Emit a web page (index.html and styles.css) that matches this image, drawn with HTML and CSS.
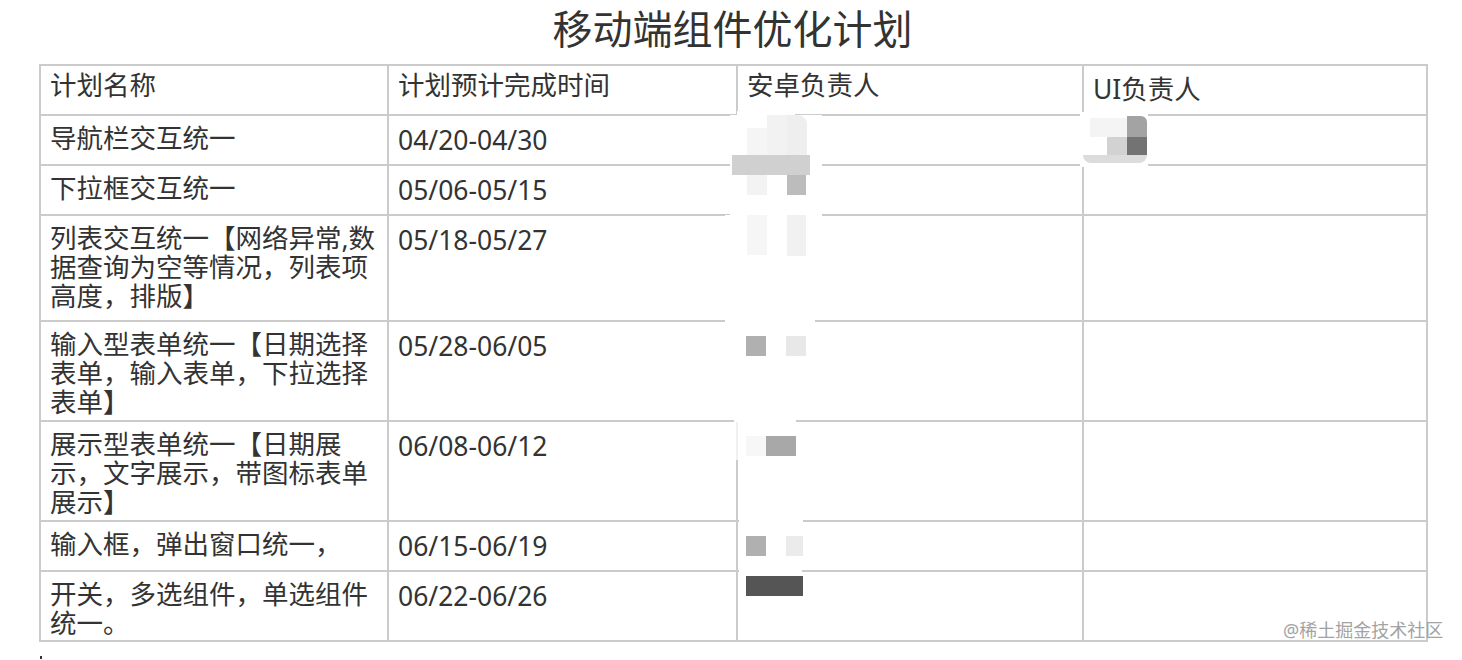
FILE: index.html
```html
<!DOCTYPE html>
<html lang="zh-CN">
<head>
<meta charset="utf-8">
<title>移动端组件优化计划</title>
<link rel="stylesheet" href="styles.css">
</head>
<body>
<div class="page">
  <h1 class="title">移动端组件优化计划</h1>
  <table class="plan">
    <colgroup>
      <col class="c1"><col class="c2"><col class="c3"><col class="c4">
    </colgroup>
    <tr class="h50 head">
      <td>计划名称</td><td>计划预计完成时间</td><td>安卓负责人</td><td class="ui">UI负责人</td>
    </tr>
    <tr class="h50">
      <td>导航栏交互统一</td><td class="date">04/20-04/30</td><td></td><td></td>
    </tr>
    <tr class="h50">
      <td>下拉框交互统一</td><td class="date">05/06-05/15</td><td></td><td></td>
    </tr>
    <tr class="h106">
      <td>列表交互统一【网络异常,数据查询为空等情况，列表项高度，排版】</td><td class="date">05/18-05/27</td><td></td><td></td>
    </tr>
    <tr class="h100">
      <td>输入型表单统一【日期选择表单，输入表单，下拉选择表单】</td><td class="date">05/28-06/05</td><td></td><td></td>
    </tr>
    <tr class="h100">
      <td>展示型表单统一【日期展示，文字展示，带图标表单展示】</td><td class="date">06/08-06/12</td><td></td><td></td>
    </tr>
    <tr class="h50">
      <td>输入框，弹出窗口统一，</td><td class="date">06/15-06/19</td><td></td><td></td>
    </tr>
    <tr class="h70">
      <td>开关，多选组件，单选组件统一。</td><td class="date">06/22-06/26</td><td></td><td></td>
    </tr>
  </table>

  <!-- redaction mosaic over the owner columns -->
  <div class="m w1"></div>
  <div class="m w2"></div>
  <div class="m w3"></div>
  <div class="m w4"></div>
  <div class="m w5"></div>
  <div class="m w6"></div>
  <div class="m w7"></div>
  <div class="m w8"></div>

  <div class="m a1"></div>
  <div class="m a2"></div>
  <div class="m a3"></div>
  <div class="m a4"></div>
  <div class="m a5"></div>
  <div class="m a6"></div>
  <div class="m b1"></div>
  <div class="m b2"></div>
  <div class="m c1m"></div>
  <div class="m c2m"></div>
  <div class="m d1"></div>
  <div class="m d2"></div>
  <div class="m e1"></div>
  <div class="m e2"></div>
  <div class="m f1"></div>

  <div class="m u1"></div>
  <div class="m u2"></div>
  <div class="m u3"></div>
  <div class="m u4"></div>
  <div class="m u5"></div>

  <div class="watermark">@稀土掘金技术社区</div>
  <div class="dot"></div>
</div>
</body>
</html>
```
FILE: styles.css
```css
html, body {
  margin: 0;
  padding: 0;
  background: #ffffff;
}

body {
  font-family: "Noto Sans", "Noto Sans CJK SC", sans-serif;
  color: #333333;
}

.page {
  position: relative;
  width: 1462px;
  height: 660px;
  overflow: hidden;
}

.title {
  margin: 0 0 0 39px;
  padding-top: 2px;
  width: 1387px;
  line-height: 54px;
  font-size: 40px;
  font-weight: normal;
  text-align: center;
  color: #333333;
}

.plan {
  margin: 8px 0 0 39px;
  width: 1387px;
  table-layout: fixed;
  border-collapse: collapse;
}

.plan .c1 { width: 348px; }
.plan .c2 { width: 349px; }
.plan .c3 { width: 346px; }
.plan .c4 { width: 344px; }

.plan td {
  border: 2px solid #cbcbcb;
  padding: 8px 6px 0 9px;
  vertical-align: top;
  font-size: 26.5px;
  line-height: 29px;
  color: #333333;
}

.plan td.date {
  padding-top: 10px;
}

.plan .head td {
  padding-top: 5px;
}

.plan .head td.ui {
  padding-top: 9px;
}

.h50 { height: 50px; }
.h70 { height: 70px; }
.h100 { height: 100px; }
.h106 { height: 106px; }

/* mosaic pieces */
.m {
  position: absolute;
  background: #ffffff;
}

.w1 { left: 737px; top: 111px; width: 58px; height: 5px; }
.w2 { left: 730px; top: 115px; width: 92px; height: 101px; }
.w3 { left: 725px; top: 215px; width: 90px; height: 107px; }
.w4 { left: 734px; top: 321px; width: 62px; height: 101px; }
.w5 { left: 734px; top: 420px; width: 6px; height: 40px; background: rgba(255, 255, 255, 0.7); }
.w6 { left: 739px; top: 518px; width: 64px; height: 4px; }
.w7 { left: 739px; top: 568px; width: 63px; height: 4px; }
.w8 { left: 1080px; top: 112px; width: 68px; height: 55px; }

.a1 { left: 747px; top: 128px; width: 20px; height: 62px; background: #f5f5f5; }
.a2 { left: 767px; top: 115px; width: 20px; height: 40px; background: #f2f2f2; }
.a3 { left: 787px; top: 115px; width: 20px; height: 40px; background: #eeeeee; border-top-right-radius: 9px; }
.a4 { left: 732px; top: 155px; width: 78px; height: 20px; background: #d0d0d0; }
.a5 { left: 787px; top: 175px; width: 19px; height: 20px; background: #bcbcbc; }
.a6 { left: 747px; top: 175px; width: 20px; height: 20px; background: #f3f3f3; }
.b1 { left: 747px; top: 215px; width: 20px; height: 40px; background: #f6f6f6; }
.b2 { left: 787px; top: 215px; width: 19px; height: 41px; background: #f1f1f1; }
.c1m { left: 746px; top: 336px; width: 20px; height: 20px; background: #b0b0b0; }
.c2m { left: 786px; top: 336px; width: 20px; height: 20px; background: #e8e8e8; }
.d1 { left: 766px; top: 436px; width: 30px; height: 20px; background: #a8a8a8; }
.d2 { left: 746px; top: 436px; width: 20px; height: 20px; background: #f7f7f7; }
.e1 { left: 746px; top: 536px; width: 20px; height: 20px; background: #b0b0b0; }
.e2 { left: 786px; top: 536px; width: 17px; height: 20px; background: #ebebeb; }
.f1 { left: 746px; top: 576px; width: 57px; height: 20px; background: #555555; }

.u1 { left: 1090px; top: 118px; width: 37px; height: 19px; background: #f4f4f4; }
.u2 { left: 1127px; top: 116px; width: 20px; height: 21px; background: #a3a3a3; border-top-right-radius: 6px; }
.u3 { left: 1107px; top: 137px; width: 20px; height: 18px; background: #d2d2d2; }
.u4 { left: 1127px; top: 137px; width: 20px; height: 18px; background: #737373; }
.u5 { left: 1083px; top: 155px; width: 64px; height: 8px; background: #dcdcdc; border-radius: 0 0 8px 8px; }

.watermark {
  position: absolute;
  left: 1283px;
  top: 619px;
  font-size: 18px;
  line-height: 22px;
  color: #a3a3a3;
  white-space: nowrap;
}

.dot {
  position: absolute;
  left: 40px;
  top: 656px;
  width: 2px;
  height: 3px;
  background: #333333;
}
```
